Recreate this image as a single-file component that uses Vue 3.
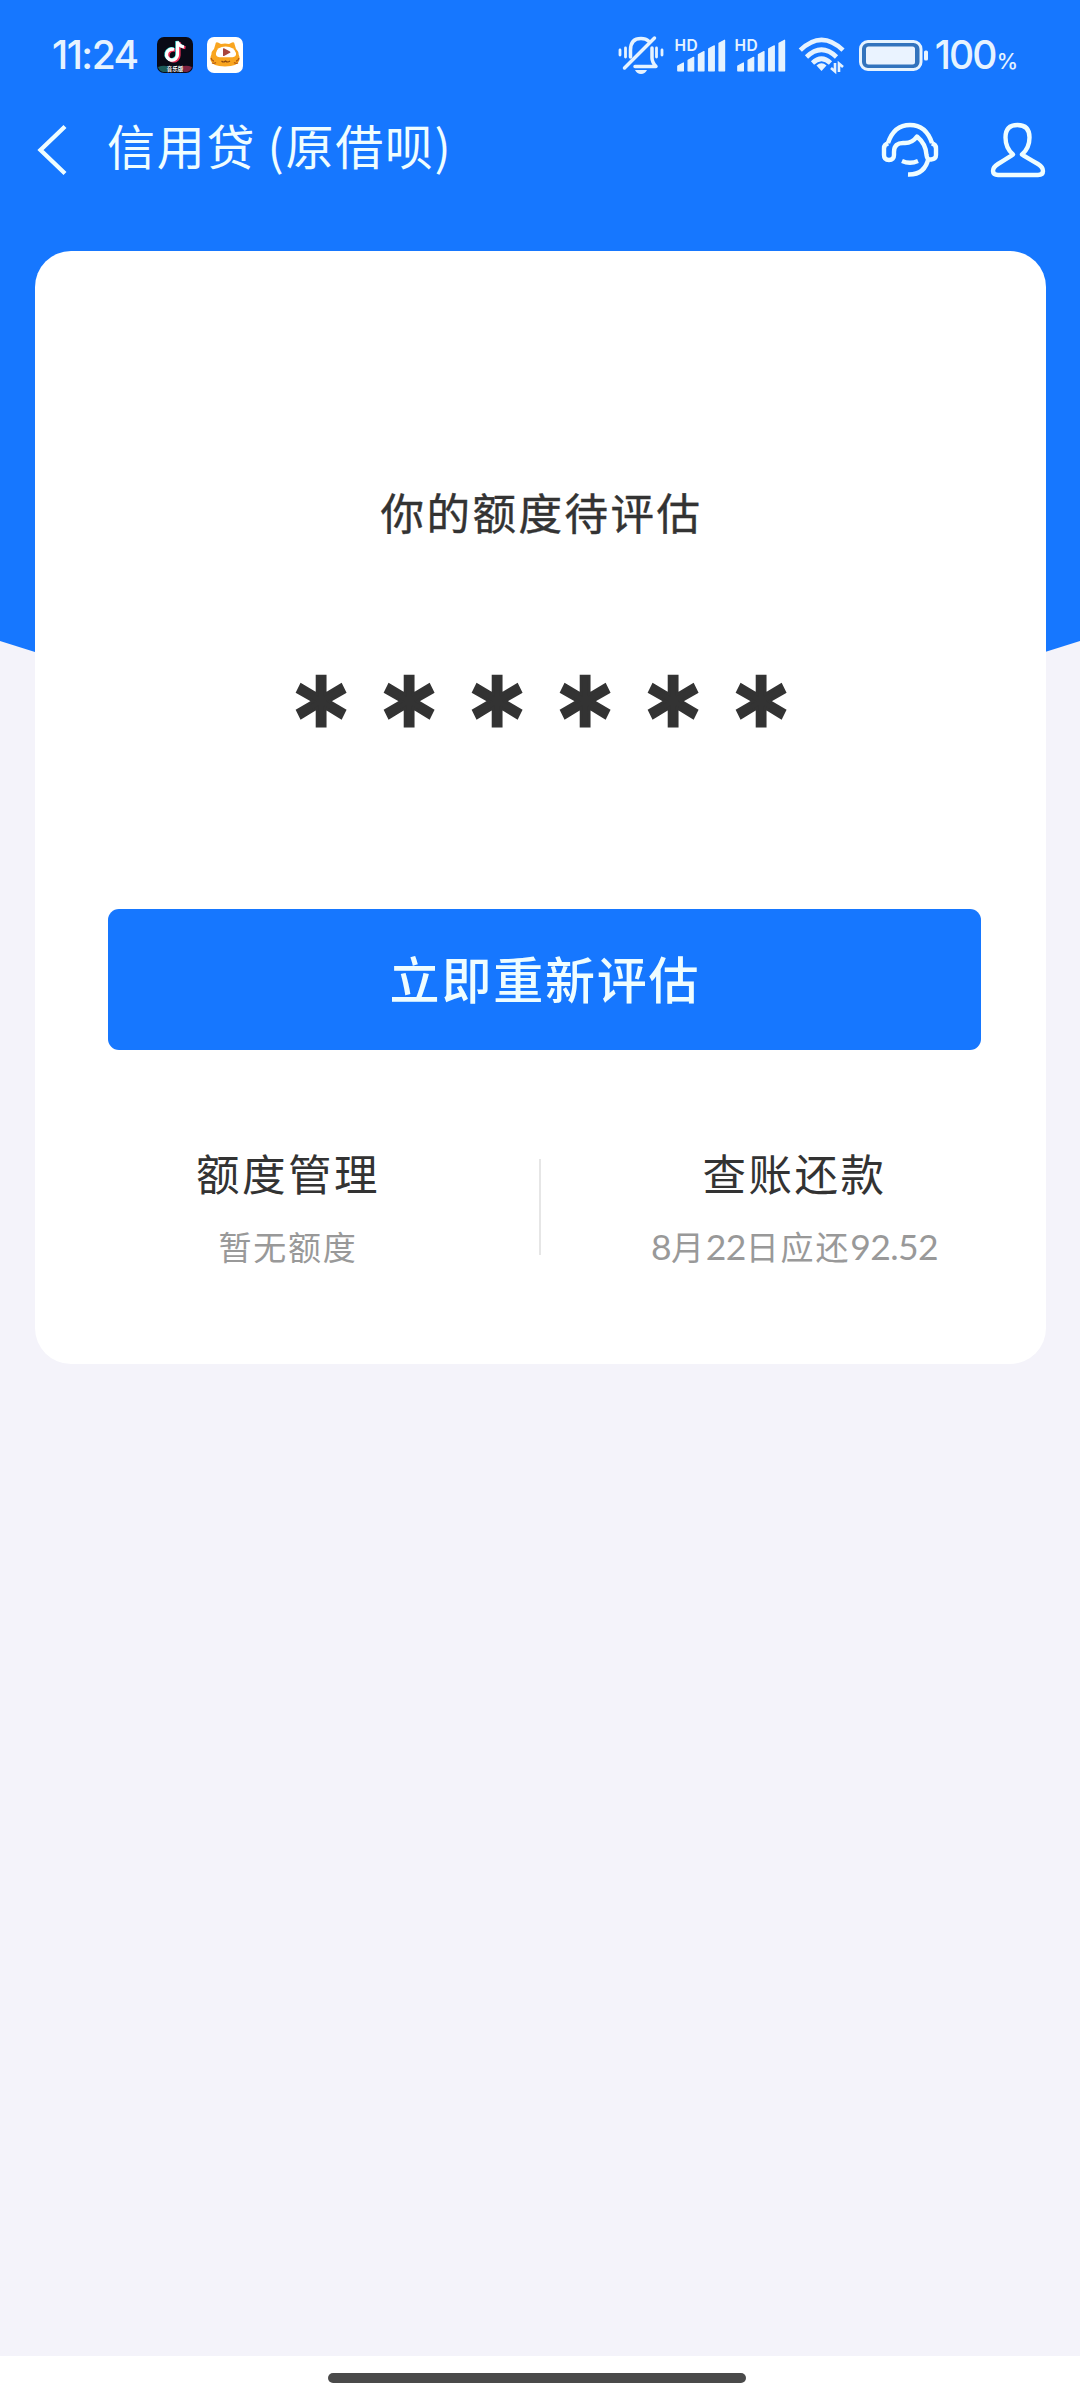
<script setup>
const bars = [0, 1, 2, 3, 4]
const sims = [0, 1]
</script>

<template>
  <div class="page">
    <div class="backdrop"></div>

    <header class="status">
      <span class="clock">11:24</span>
      <svg class="app-icon app-music" viewBox="0 0 36 36">
        <rect width="36" height="36" rx="7" fill="#090a16" />
        <path d="M1 30Q7 27.500 12 30L10 35H6Q2 34 1 30Z" fill="#1d5b58" />
        <path d="M35 30Q29 27.500 24 30L27 35H30Q34 34 35 30Z" fill="#7d2442" />
        <g fill="none" stroke-width="3.200">
          <path d="M17.500 12.500a5.500 5.500 0 1 0 3.500 5V4.500q1 4.500 6.500 5.500" stroke="#f5335f" transform="translate(1 .8)" />
          <path d="M17 12.500a5.500 5.500 0 1 0 3.500 5V4.500q1 4.500 6.500 5.500" stroke="#38e6df" transform="translate(-.6 -.4)" />
          <path d="M17 12.500a5.500 5.500 0 1 0 3.500 5V4.500q1 4.500 6.500 5.500" stroke="#fff" />
        </g>
        <text x="18" y="33.500" text-anchor="middle" font-size="5.500" font-weight="700" fill="#fff">音乐版</text>
      </svg>
      <svg class="app-icon" viewBox="0 0 36 36">
        <rect width="36" height="36" rx="7" fill="#fff" />
        <path d="M8.500 7q0-2.500 2.500-1.500l3 1.500q4-.8 8 0l3-1.500q2.500-1 2.500 1.500L29 12q3 3 2.500 5Q33 20 32.500 23 31 29.500 18 29.500T3.500 23Q3 20 4.500 17 4 15 7 12Z" fill="#f9a51f" />
        <path d="M4 21q1 3 3 3M5 26q2 1 4-.5M32 21q-1 3-3 3M31 26q-2 1-4-.5" stroke="#b85d12" stroke-width="1.300" fill="none" />
        <path d="M9 16q1-6.500 9.500-6.500T29 16q.5 4-3.500 4.200H12.500Q8.500 20 9 16Z" fill="#fff" />
        <path d="M16 11.800q0-1 1-.5l6 3.200q1 .7 0 1.300l-6 3.200q-1 .4-1-.6Z" fill="#a8453c" />
        <path d="M14.500 24q2 2 4 0 2 2 4.500 0" stroke="#8c4a10" stroke-width="1.100" fill="none" />
      </svg>

      <div class="status-right">
        <svg class="mute" viewBox="0 0 46 40">
          <g fill="none" stroke="#e6f3ff" stroke-width="3.500" stroke-linecap="round" stroke-linejoin="round">
            <path d="M12.500 22V15Q12.500 3.500 23 3.500Q28 3.500 30.500 6" />
            <path d="M34 13v10q0 4 4 8.500H17" />
            <path d="M36.500 3L6.500 33" />
            <path d="M2 15v5M7.500 13v9M38.500 13v9M44 15v5" stroke-width="2.800" />
          </g>
          <path d="M17 35h12q-2 4-6 4t-6-4Z" fill="#e6f3ff" />
        </svg>
        <svg v-for="s in sims" :key="s" class="signal" viewBox="0 -6 52 46">
          <text x="-0.500" y="12.500" font-size="15.500" font-weight="600" letter-spacing="0.400" fill="#e6f3ff">HD</text>
          <path
            v-for="b in bars"
            :key="b"
            :d="`M${2.8 + b * 10.3} ${28 - b * 5.7}l5.600-3V32.800h-5.600Z`"
            fill="#e6f3ff"
            stroke="#e6f3ff"
            stroke-width="1.200"
            stroke-linejoin="round"
          />
        </svg>
        <svg class="wifi" viewBox="0 0 48 36">
          <g fill="none" stroke="#e6f3ff" stroke-width="4.600">
            <path d="M2.300 13.200Q23.500-7.500 45 13.200" />
            <path d="M8.500 20Q23.500 5.500 38.500 20" />
            <path d="M14.500 26Q23.500 17.500 32.500 26" />
          </g>
          <path d="M18.500 28.500q5-4.500 10 0L23.500 34Z" fill="#e6f3ff" />
          <path d="M37 26v8.500l-4-3.500M41 35v-8.500l4 3.500" fill="none" stroke="#e6f3ff" stroke-width="2.600" />
        </svg>
        <svg class="battery" viewBox="0 0 70 31">
          <rect x="1.500" y="1.500" width="60.500" height="28" rx="7.500" fill="#3273bd" stroke="#e6f3ff" stroke-width="3" />
          <rect x="7" y="6.500" width="49" height="18" rx="2.500" fill="#eaf3ff" />
          <rect x="65" y="10.500" width="4" height="10" rx="1.500" fill="#e6f3ff" />
        </svg>
        <span class="percent">100</span><span class="sign">%</span>
      </div>
    </header>

    <nav class="nav">
      <svg class="back" viewBox="0 0 30 50"><path d="M28 1.500L3.500 25L28 48.500" fill="none" stroke="#effdff" stroke-width="4.300" /></svg>
      <h1 class="title">信用贷 (原借呗)</h1>
      <svg class="service" viewBox="0 0 56 54">
        <g fill="none" stroke="#effdff" stroke-width="4.400" stroke-linejoin="round">
          <path d="M6 20Q12 2 28 2T50 20" />
          <path d="M6.500 20.500Q2 21 2 25.500V32Q2 37 7 37Q12 37 12 32V29Q12 19.500 22 20Q30 20.500 35 13.500Q44 21 44.500 32Q45 37 49 36.500Q54 36 54 32V25.500Q54 21 49.500 20.500" />
          <path d="M46.500 35Q43 52 26 51.500" />
          <path d="M20 38Q28 41.500 36 38" />
        </g>
      </svg>
      <svg class="user" viewBox="0 0 54 54">
        <path d="M22 31.500Q14.500 25 14.500 14.500Q14.500 2 26.500 2T38.500 14.500Q38.500 25 31 31.500Q33 33 47 41Q52 44 52 48T47 52H7Q2 52 2 48T7 41Q20 33 22 31.500Z" fill="none" stroke="#effdff" stroke-width="4.400" stroke-linejoin="round" />
      </svg>
    </nav>

    <main class="card">
      <h2 class="headline">你的额度待评估</h2>
      <div class="stars"><span v-for="n in 6" :key="n">*</span></div>
      <button class="cta">立即重新评估</button>
      <section class="links">
        <div class="link">
          <div class="name">额度管理</div>
          <div class="note">暂无额度</div>
        </div>
        <div class="divider"></div>
        <div class="link">
          <div class="name">查账还款</div>
          <div class="note"><b>8</b>月<b>22</b>日应还<b>92.52</b></div>
        </div>
      </section>
    </main>

    <footer class="gesture"><div class="handle"></div></footer>
  </div>
</template>

<style>
body { margin: 0; background: #f4f3fa; }
</style>

<style scoped>
.page {
  position: relative;
  width: 1080px;
  height: 2400px;
  display: flex;
  flex-direction: column;
  overflow: hidden;
  background: #f4f3fa;
  font-family: "Noto Sans CJK SC", sans-serif;
}
svg { display: block; flex: none; overflow: visible; }
.backdrop {
  position: absolute;
  inset: 0 0 auto;
  height: 700px;
  background: #1677ff;
  clip-path: polygon(0 0, 100% 0, 100% 641px, 1045px 652px, 900px 690px, 180px 690px, 35px 652px, 0 641px);
}
.status, .nav, .card, .gesture { position: relative; box-sizing: border-box; flex: none; }
.status {
  height: 110px;
  padding: 0 62px 0 52px;
  display: flex;
  align-items: center;
  color: #e6f3ff;
}
.clock {
  width: 105px;
  font: 500 39px/112px Inter, sans-serif;
  letter-spacing: -1.500px;
}
.app-icon { width: 36px; height: 36px; margin-right: 14px; }
.status-right {
  margin-left: auto;
  display: flex;
  align-items: center;
  font-family: Inter, sans-serif;
}
.mute { width: 46px; height: 40px; margin-right: 11px; }
.signal { width: 52px; height: 46px; margin-right: 8px; }
.wifi { width: 48px; height: 36px; margin: 0 13px 0 3px; }
.battery { width: 70px; height: 31px; margin-right: 6px; }
.percent { font: 500 39px/112px Inter, sans-serif; letter-spacing: -1.900px; }
.sign { font: 500 21.500px/22px Inter, sans-serif; margin: 11px 0 0 1px; }

.nav {
  height: 80px;
  padding: 0 35px 0 37px;
  display: flex;
  align-items: center;
}
.back { width: 30px; height: 50px; }
.title {
  margin: -12px auto 0 40px;
  font-size: 48px;
  line-height: 80px;
  font-weight: 400;
  letter-spacing: 1.700px;
  word-spacing: -1px;
  color: #effdff;
}
.service { width: 56px; height: 54px; margin-right: 53px; }
.user { width: 54px; height: 54px; }

.card {
  width: 1011px;
  height: 1113px;
  margin: 61px 0 0 35px;
  padding-top: 226px;
  border-radius: 36px;
  background: #fff;
  color: #333;
}
.headline {
  margin: 0;
  font-size: 43.500px;
  line-height: 70px;
  font-weight: 400;
  letter-spacing: 2.500px;
  text-indent: 2px;
  text-align: center;
  -webkit-text-stroke: 0.400px #333;
}
.stars {
  height: 70px;
  margin-top: 117px;
  display: flex;
  justify-content: center;
}
.stars span {
  width: 88px;
  height: 110px;
  font: 700 102px/110px "DejaVu Sans", sans-serif;
  text-align: center;
  -webkit-text-stroke: 2.800px #333;
  transform: scale(0.96, 1.05);
}
.cta {
  display: block;
  width: 873px;
  height: 141px;
  margin: 175px 0 0 73px;
  padding: 0 0 5px;
  border: 0;
  border-radius: 11px;
  background: #1677ff;
  color: #effdff;
  font: 500 50px/136px "Noto Sans CJK SC", sans-serif;
  letter-spacing: 1.800px;
  text-indent: 1px;
}
.links { display: flex; margin-top: 89px; }
.link { flex: 1; text-align: center; }
.divider { width: 2px; height: 96px; margin: 20px 1px 0 -1px; background: #e6e6e6; }
.name { font-size: 43.500px; line-height: 68px; letter-spacing: 2.500px; text-indent: 1.500px; }
.note { margin-top: 12px; font-size: 33px; line-height: 54px; letter-spacing: 1.800px; text-indent: 1.500px; color: #999; }
.note b { font: 400 35.500px/54px Lato, sans-serif; letter-spacing: -0.600px; }

.gesture {
  height: 44px;
  margin-top: auto;
  padding-top: 17px;
  background: #fff;
}
.handle { width: 418px; height: 10px; margin-left: 328px; border-radius: 5px; background: #4a4a4a; }
</style>
